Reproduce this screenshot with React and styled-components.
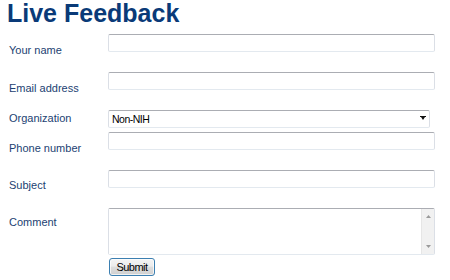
import React from "react";
import styled, { createGlobalStyle } from "styled-components";

const Global = createGlobalStyle`
  html, body { margin: 0; padding: 0; background: #ffffff; }
  body { font-family: "Liberation Sans", Arial, sans-serif; width: 450px; height: 280px; overflow: hidden; }
`;

const Page = styled.div`
  width: 450px;
  height: 280px;
  background: #fff;
`;

const Title = styled.h1`
  margin: 0;
  padding-left: 7px;
  font-family: "Liberation Sans", Arial, sans-serif;
  font-weight: bold;
  font-size: 25px;
  line-height: 26px;
  color: #0a3a78;
`;

const Form = styled.form`
  margin-top: 8px;
  padding-left: 9px;
  display: flex;
  flex-direction: column;
`;

const Row = styled.div`
  display: grid;
  grid-template-columns: 99px 327px;
  align-items: start;
  height: ${(p) => p.$height}px;
`;

const Label = styled.label`
  padding-top: ${(p) => p.$offset}px;
  font-size: 11px;
  line-height: 13px;
  color: #1c3f72;
`;

const fieldBorder = `
  border: 1px solid #dbdfe6;
  border-top-color: #abadb3;
  border-bottom-color: #e3e9ef;
  border-radius: 2px;
`;

const TextInput = styled.input`
  box-sizing: border-box;
  width: ${(p) => p.$width || 327}px;
  height: 18px;
  margin: 0;
  padding: 0 3px;
  ${fieldBorder}
  background: #fff;
  font-family: "Liberation Sans", Arial, sans-serif;
  font-size: 10.5px;
  outline: none;
`;

const SelectWrap = styled.div`
  position: relative;
  width: 322px;
  height: 18px;
`;

const Select = styled.select`
  box-sizing: border-box;
  width: 322px;
  height: 18px;
  margin: 0;
  padding: 1px 0 0 3px;
  ${fieldBorder}
  background: #fff;
  appearance: none;
  -webkit-appearance: none;
  font-family: "Liberation Sans", Arial, sans-serif;
  font-size: 10.5px;
  letter-spacing: -0.5px;
  color: #000;
  outline: none;
`;

const SelectArrow = styled.svg`
  position: absolute;
  right: 4px;
  top: 7px;
  pointer-events: none;
`;

const AreaBox = styled.div`
  box-sizing: border-box;
  width: 327px;
  height: 47px;
  ${fieldBorder}
  display: flex;
  background: #fff;
`;

const TextArea = styled.textarea`
  flex: 1;
  border: none;
  margin: 0;
  padding: 2px 3px;
  resize: none;
  overflow: hidden;
  outline: none;
  font-family: "Liberation Sans", Arial, sans-serif;
  font-size: 10.5px;
`;

const ScrollBar = styled.div`
  width: 12px;
  background: #f1f1f1;
  border-left: 1px solid #e6e6e6;
  display: flex;
  flex-direction: column;
  align-items: center;
  justify-content: space-between;
  padding: 6px 0 6px;
`;

const ButtonRow = styled.div`
  display: grid;
  grid-template-columns: 100px auto;
  margin-top: 3px;
`;

const Button = styled.button`
  box-sizing: border-box;
  width: 46px;
  height: 18px;
  margin: 0;
  padding: 0 0 1px;
  border: 1px solid #3c7fb1;
  border-radius: 3px;
  background: linear-gradient(#f4f4f4 0%, #ececec 45%, #dddddd 50%, #d0d0d0 100%);
  box-shadow: inset 0 0 0 1px rgba(255, 255, 255, 0.7);
  font-family: "Liberation Sans", Arial, sans-serif;
  font-size: 11px;
  letter-spacing: -0.5px;
  color: #000;
`;

const Arrow = ({ up, color = "#9a9a9a" }) => (
  <svg width="5" height="3" viewBox="0 0 5 3">
    <path d={up ? "M0 3 L2.5 0 L5 3 Z" : "M0 0 L5 0 L2.5 3 Z"} fill={color} />
  </svg>
);

const fields = [
  { label: "Your name", height: 38, offset: 10 },
  { label: "Email address", height: 37, offset: 9.5 },
];

export default function App() {
  return (
    <Page>
      <Global />
      <Title>Live Feedback</Title>
      <Form onSubmit={(e) => e.preventDefault()}>
        {fields.map((f) => (
          <Row key={f.label} $height={f.height}>
            <Label $offset={f.offset}>{f.label}</Label>
            <TextInput type="text" />
          </Row>
        ))}
        <Row $height={23}>
          <Label $offset={2.5}>Organization</Label>
          <SelectWrap>
            <Select defaultValue="Non-NIH">
              <option>Non-NIH</option>
              <option>NIH</option>
            </Select>
            <SelectArrow width="6" height="4" viewBox="0 0 6 4">
              <path d="M0 0 L6 0 L6 1 L5 1 L3 4 L1 1 L0 1 Z" fill="#111" />
            </SelectArrow>
          </SelectWrap>
        </Row>
        <Row $height={38}>
          <Label $offset={9.5}>Phone number</Label>
          <TextInput type="text" />
        </Row>
        <Row $height={38}>
          <Label $offset={9}>Subject</Label>
          <TextInput type="text" />
        </Row>
        <Row $height={47}>
          <Label $offset={7.5}>Comment</Label>
          <AreaBox>
            <TextArea />
            <ScrollBar>
              <Arrow up />
              <Arrow />
            </ScrollBar>
          </AreaBox>
        </Row>
        <ButtonRow>
          <span />
          <Button type="submit">Submit</Button>
        </ButtonRow>
      </Form>
    </Page>
  );
}
